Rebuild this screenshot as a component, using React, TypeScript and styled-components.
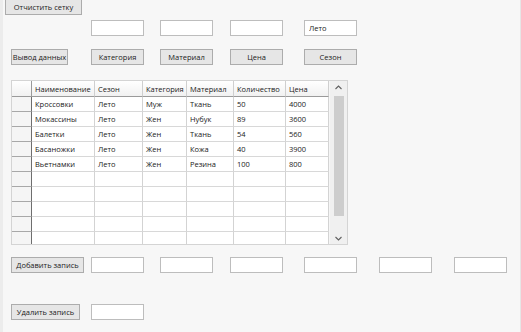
import React from 'react';
import styled, { createGlobalStyle } from 'styled-components';

const Global = createGlobalStyle`
  html, body { margin: 0; padding: 0; background: #f7f7f7; }
  body {
    font-family: "Open Sans", "Noto Sans", sans-serif;
    font-size: 7.5px;
    color: #1a1a1a;
  }
`;

const Window = styled.div`
  width: 521px;
  height: 332px;
  box-sizing: border-box;
  overflow: hidden;
  background: #f7f7f7;
  box-shadow: inset 3px 0 0 #ececec, inset -1px 0 0 #e6e6e6;
  display: flex;
  flex-direction: column;
`;

const FormRow = styled.div<{ $mt: number }>`
  display: grid;
  grid-template-columns: 80px 69px 70px 74px 75px 75px 60px;
  padding-left: 11px;
  margin-top: ${p => p.$mt}px;
  height: 16px;
  align-items: start;
`;

const TopRow = styled.div`
  display: flex;
  padding-left: 5px;
  margin-top: -1px;
  height: 15px;
`;

const Button = styled.button<{ $w: number; $col?: number }>`
  grid-column: ${p => p.$col ?? 1};
  width: ${p => p.$w}px;
  height: 16px;
  box-sizing: border-box;
  border: 1px solid #acacac;
  background: #e6e6e6;
  font: inherit;
  font-size: 7.5px;
  color: #222;
  padding: 0;
  display: flex;
  align-items: center;
  justify-content: center;
  white-space: nowrap;
`;

const TextBox = styled.input<{ $col: number }>`
  grid-column: ${p => p.$col};
  width: 53px;
  height: 16px;
  box-sizing: border-box;
  border: 1px solid #bdbdbd;
  background: #fff;
  font: inherit;
  font-size: 7.5px;
  color: #222;
  padding: 0 0 0 4px;
  margin: 0;
  outline: none;
`;

const GridBox = styled.div`
  margin-top: 15px;
  margin-left: 11px;
  width: 337px;
  height: 165px;
  box-sizing: border-box;
  border: 1px solid #d4d4d4;
  background: #fff;
  display: flex;
  overflow: hidden;
`;

const Table = styled.div`
  display: grid;
  grid-template-columns: 20px 63px 48px 44px 47px 52px 43px;
  grid-auto-rows: 15px;
  grid-template-rows: 16px;
  align-content: start;
  width: 317px;
`;

const HeadCell = styled.div<{ $corner?: boolean }>`
  box-sizing: border-box;
  border-right: 1px solid ${p => (p.$corner ? '#9a9a9a' : '#cfcfcf')};
  border-bottom: 1px solid #9a9a9a;
  background: linear-gradient(#ffffff, #f1f1f1);
  padding-left: 3px;
  display: flex;
  align-items: center;
  white-space: nowrap;
  overflow: hidden;
  color: #222;
`;

const RowHead = styled.div`
  box-sizing: border-box;
  background: #f5f5f5;
  border-right: 1px solid #6e6e6e;
  border-bottom: 1px solid #a8a8a8;
`;

const Cell = styled.div`
  box-sizing: border-box;
  border-right: 1px solid #d3d3d3;
  border-bottom: 1px solid #d8d8d8;
  padding-left: 3px;
  display: flex;
  align-items: center;
  white-space: nowrap;
  overflow: hidden;
  color: #222;
`;

const ScrollBar = styled.div`
  width: 18px;
  background: #f0f0f0;
  border-left: 1px solid #f6f6f6;
  display: flex;
  flex-direction: column;
  align-items: center;
`;

const Arrow = styled.div`
  height: 17px;
  width: 100%;
  display: flex;
  align-items: center;
  justify-content: center;
`;

const Track = styled.div`
  flex: 1;
  width: 100%;
  display: flex;
  justify-content: center;
  padding: 3px 0 16px;
  box-sizing: border-box;
`;

const Thumb = styled.div`
  width: 10px;
  height: 120px;
  background: #cdcdcd;
`;

const headers = ['Наименование', 'Сезон', 'Категория', 'Материал', 'Количество', 'Цена'];
const rows: string[][] = [
  ['Кроссовки', 'Лето', 'Муж', 'Ткань', '50', '4000'],
  ['Мокассины', 'Лето', 'Жен', 'Нубук', '89', '3600'],
  ['Балетки', 'Лето', 'Жен', 'Ткань', '54', '560'],
  ['Басаножки', 'Лето', 'Жен', 'Кожа', '40', '3900'],
  ['Вьетнамки', 'Лето', 'Жен', 'Резина', '100', '800'],
  ['', '', '', '', '', ''],
  ['', '', '', '', '', ''],
  ['', '', '', '', '', ''],
  ['', '', '', '', '', ''],
  ['', '', '', '', '', ''],
];

const Chevron = ({ up }: { up?: boolean }) => (
  <svg width="7" height="5" viewBox="0 0 7 5">
    <path
      d={up ? 'M0.5 4 L3.5 1 L6.5 4' : 'M0.5 1 L3.5 4 L6.5 1'}
      fill="none"
      stroke="#606060"
      strokeWidth="1.1"
    />
  </svg>
);

export default function App() {
  return (
    <>
      <Global />
      <Window>
        <TopRow>
          <Button $w={77}>Отчистить сетку</Button>
        </TopRow>

        <FormRow $mt={6}>
          <TextBox $col={2} readOnly />
          <TextBox $col={3} readOnly />
          <TextBox $col={4} readOnly />
          <TextBox $col={5} readOnly value="Лето" />
        </FormRow>

        <FormRow $mt={13}>
          <Button $w={57}>Вывод данных</Button>
          <Button $w={53} $col={2}>Категория</Button>
          <Button $w={53} $col={3}>Материал</Button>
          <Button $w={53} $col={4}>Цена</Button>
          <Button $w={53} $col={5}>Сезон</Button>
        </FormRow>

        <GridBox>
          <Table>
            <HeadCell $corner />
            {headers.map(h => (
              <HeadCell key={h}>{h}</HeadCell>
            ))}
            {rows.map((r, i) => (
              <React.Fragment key={i}>
                <RowHead />
                {r.map((c, j) => (
                  <Cell key={j}>{c}</Cell>
                ))}
              </React.Fragment>
            ))}
          </Table>
          <ScrollBar>
            <Arrow>
              <Chevron up />
            </Arrow>
            <Track>
              <Thumb />
            </Track>
            <Arrow>
              <Chevron />
            </Arrow>
          </ScrollBar>
        </GridBox>

        <FormRow $mt={12}>
          <Button $w={73}>Добавить запись</Button>
          <TextBox $col={2} readOnly />
          <TextBox $col={3} readOnly />
          <TextBox $col={4} readOnly />
          <TextBox $col={5} readOnly />
          <TextBox $col={6} readOnly />
          <TextBox $col={7} readOnly />
        </FormRow>

        <FormRow $mt={31}>
          <Button $w={69}>Удалить запись</Button>
          <TextBox $col={2} readOnly />
        </FormRow>
      </Window>
    </>
  );
}
